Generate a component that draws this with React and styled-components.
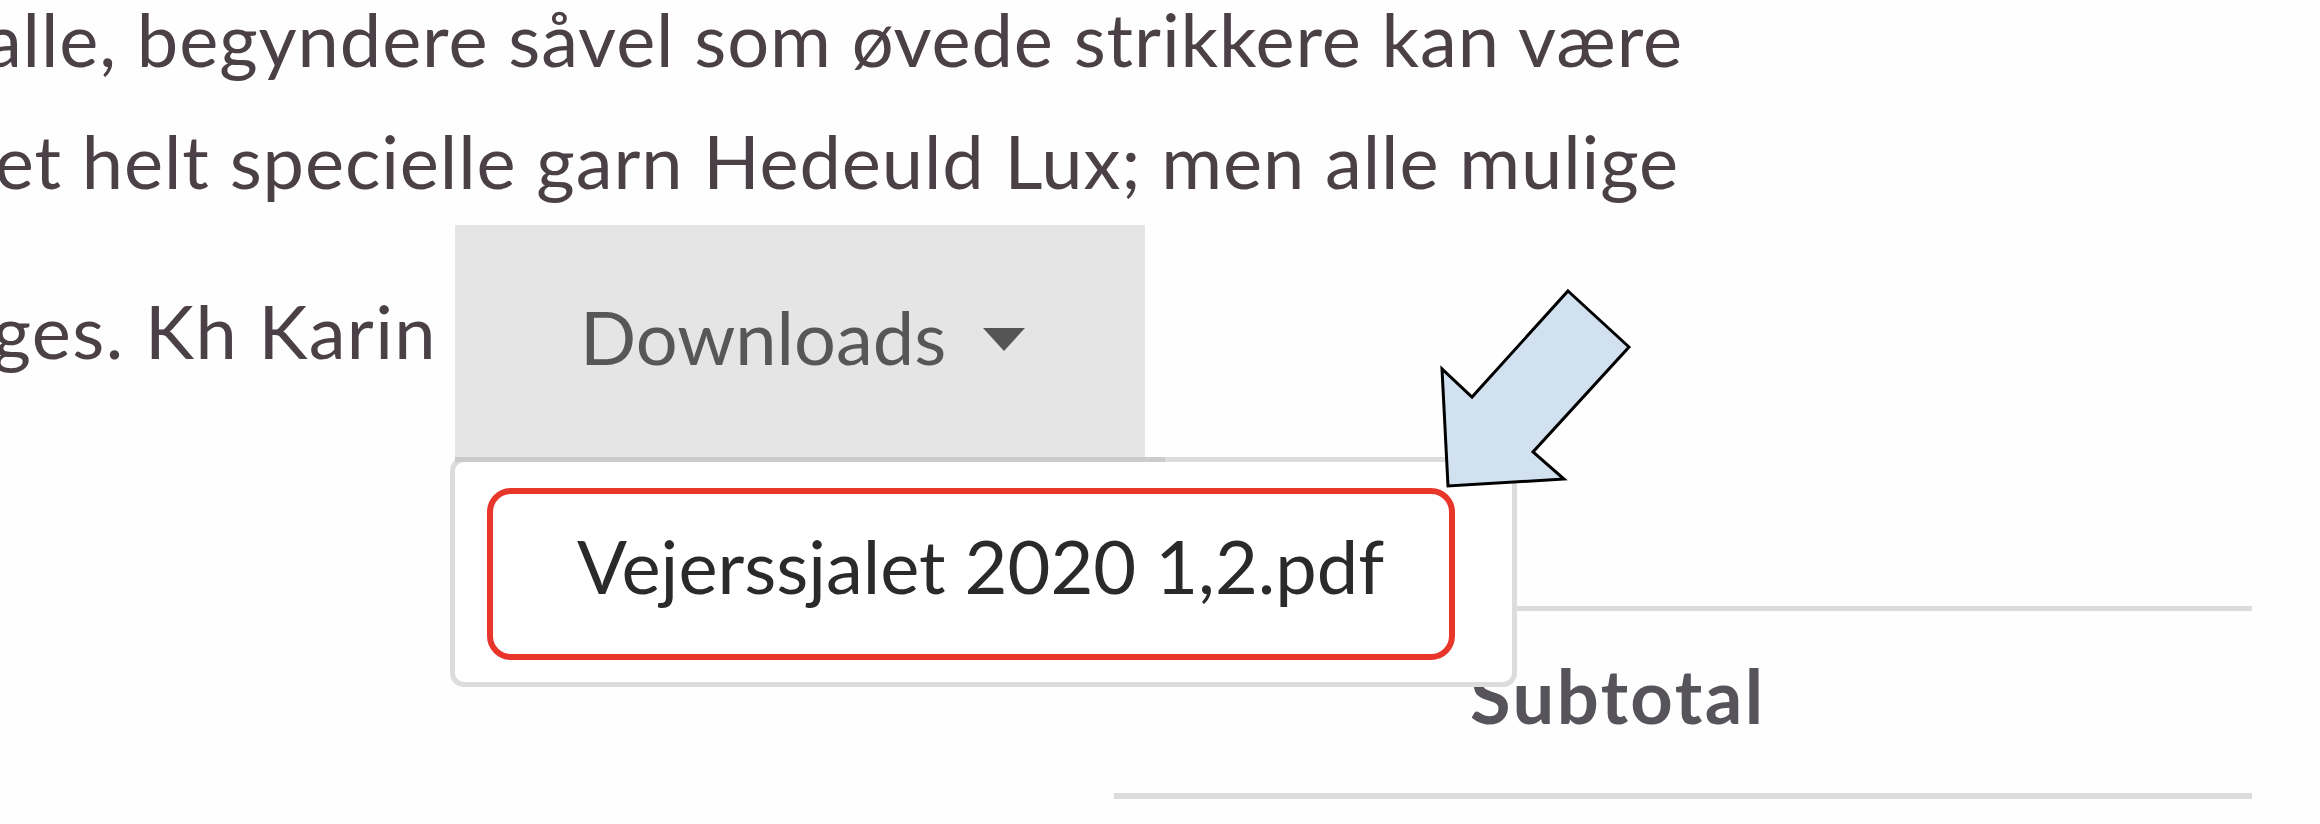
import React from 'react'
import styled, { createGlobalStyle } from 'styled-components';

const GlobalStyle = createGlobalStyle`
html, body {
  margin:0;
  padding:0;
  background:#fefefe;
}
body {
  font-family: Lato, "Open Sans", sans-serif;
}
`

const Page = styled.div`
position:relative;
width:2320px;
height:824px;
overflow:hidden;
background:#fefefe;
font-size:74px;
line-height:122px;
`
const Paragraph = styled.div`
margin-top:-22px;
color:#4a4046;
`
const Line = styled.div`
display:flex;
justify-content:flex-end;
width:${p => p.$end}px;
overflow:hidden;
white-space:nowrap;
letter-spacing:${p => p.$spacing || 0.9}px;
`
const LastRow = styled.div`
display:flex;
align-items:flex-start;
`
const LastText = styled(Line)`
margin-top:48px;
margin-right:18px;
`
const DropWrap = styled.div`
position:relative;
margin-top:3px;
`
const Toggle = styled.button`
display:flex;
align-items:flex-start;
box-sizing:border-box;
width:690px;
height:232px;
padding:51px 0 0 125px;
border:none;
border-radius:0;
background:#e5e5e5;
color:#575757;
font-family: Lato, "Open Sans", sans-serif;
font-size:74px;
line-height:122px;
cursor:pointer;
`
const Caret = styled.span`
width:0;
height:0;
margin:52px 0 0 37px;
border-left:21px solid transparent;
border-right:21px solid transparent;
border-top:23px solid #555;
`
const Menu = styled.div`
position:absolute;
top:100%;
left:-5px;
z-index:2;
box-sizing:border-box;
width:1067px;
height:230px;
border:5px solid #dcdcdc;
border-radius:14px;
background:#fff;
&::before {
  content:"";
  position:absolute;
  top:-5px;
  left:0;
  width:710px;
  height:5px;
  background:#cbcbcb;
}
`
const MenuItem = styled.a`
display:block;
box-sizing:border-box;
height:172px;
margin:26px 57px 22px 32px;
padding:11px 0 0 84px;
border:6px solid #e8362b;
border-radius:24px;
color:#2a2a2a;
text-decoration:none;
white-space:nowrap;
`
const Totals = styled.div`
width:1138px;
margin:149px 0 0 1114px;
border-top:5px solid #dcdcdc;
border-bottom:6px solid #dcdcdc;
`
const TotalLabel = styled.div`
padding:24px 0 36px 356px;
font-weight:700;
color:#57535a;
letter-spacing:2.5px;
`
const Pointer = styled.svg`
position:absolute;
left:1430px;
top:280px;
z-index:3;
`

const Arrow = () => (
   <Pointer width="215" height="220" viewBox="0 0 215 220">
      <polygon
         points="138,11 199,67 103,172 134,199 18,206 12,89 42,117"
         fill="#d2e1f0"
         stroke="#000"
         strokeWidth="3"
         strokeLinejoin="miter" />
   </Pointer>
)

export default function App() {
   return (
      <Page>
         <GlobalStyle />
         <Paragraph>
            <Line $end={1683}>Men ærligt talt, så er den til alle, begyndere såvel som øvede strikkere kan være</Line>
            <Line $end={1679}>med. Sjalet er strikket i det helt specielle garn Hedeuld Lux; men alle mulige</Line>
            <LastRow>
               <LastText $end={437} $spacing={1.4}>garntyper kan bruges. Kh Karin</LastText>
               <DropWrap>
                  <Toggle type="button">
                     Downloads
                     <Caret />
                  </Toggle>
                  <Menu>
                     <MenuItem href="#">Vejerssjalet 2020 1,2.pdf</MenuItem>
                  </Menu>
               </DropWrap>
            </LastRow>
         </Paragraph>
         <Totals>
            <TotalLabel>Subtotal</TotalLabel>
         </Totals>
         <Arrow />
      </Page>
   )
}
